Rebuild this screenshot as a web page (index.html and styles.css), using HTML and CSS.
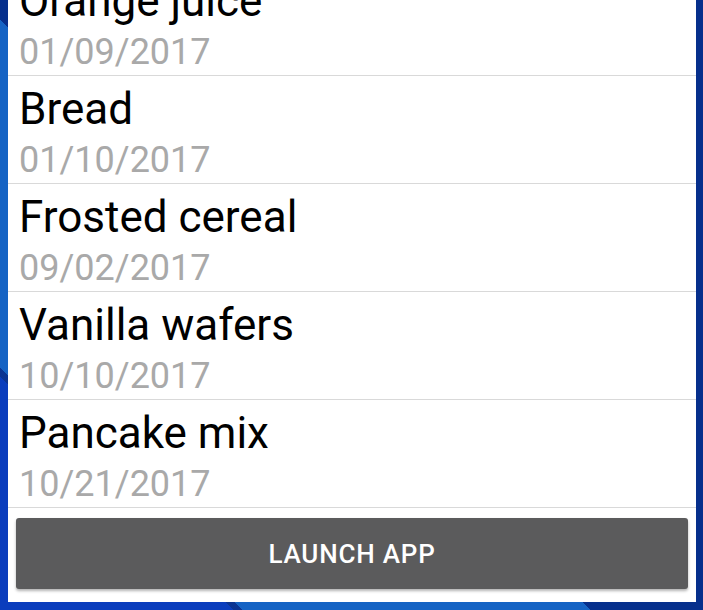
FILE: index.html
```html
<!DOCTYPE html>
<html lang="en">
<head>
<meta charset="utf-8">
<title>Groceries</title>
<link rel="stylesheet" href="styles.css">
</head>
<body>
<div class="panel">
  <ul class="list">
    <li class="row"><span class="title">Orange juice</span><span class="date">01/09/2017</span></li>
    <li class="row"><span class="title">Bread</span><span class="date">01/10/2017</span></li>
    <li class="row"><span class="title">Frosted cereal</span><span class="date">09/02/2017</span></li>
    <li class="row"><span class="title">Vanilla wafers</span><span class="date">10/10/2017</span></li>
    <li class="row"><span class="title">Pancake mix</span><span class="date">10/21/2017</span></li>
  </ul>
  <div class="actions">
    <button class="launch" type="button">LAUNCH APP</button>
  </div>
</div>
</body>
</html>
```
FILE: styles.css
```css
html, body {
  margin: 0;
  padding: 0;
  width: 703px;
  height: 610px;
  overflow: hidden;
}

body {
  background: linear-gradient(225deg, #062f8c 0 55%, #1563c4 55% 81.5%, #0b3492 81.5% 82.2%, #0a3dbd 82.2%);
  font-family: Roboto, "Noto Sans", sans-serif;
}

.panel {
  width: 688px;
  height: 602px;
  margin-left: 8px;
  background: #ffffff;
  display: flex;
  flex-direction: column;
}

.list {
  list-style: none;
  margin: 0;
  padding: 0;
  height: 508px;
  overflow: hidden;
  display: flex;
  flex-direction: column;
  justify-content: flex-end;
}

.row {
  flex: none;
  height: 107px;
  box-sizing: content-box;
  border-bottom: 1px solid #d9d9d9;
  padding: 0 11px;
  display: flex;
  flex-direction: column;
}

.title {
  font-size: 44px;
  line-height: 44px;
  color: #000000;
  margin-top: 11px;
}

.date {
  font-size: 36px;
  line-height: 36px;
  color: #a9a9a9;
  margin-top: 11px;
}

.actions {
  padding: 10px 8px 0;
}

.launch {
  display: block;
  width: 100%;
  height: 71px;
  border: none;
  border-radius: 3px;
  background: #5b5b5c;
  box-shadow: 0 2px 3px rgba(0, 0, 0, 0.3);
  color: #ffffff;
  font-family: Roboto, "Noto Sans", sans-serif;
  font-weight: 500;
  font-size: 26px;
  letter-spacing: 0.8px;
  padding: 0;
}
```
